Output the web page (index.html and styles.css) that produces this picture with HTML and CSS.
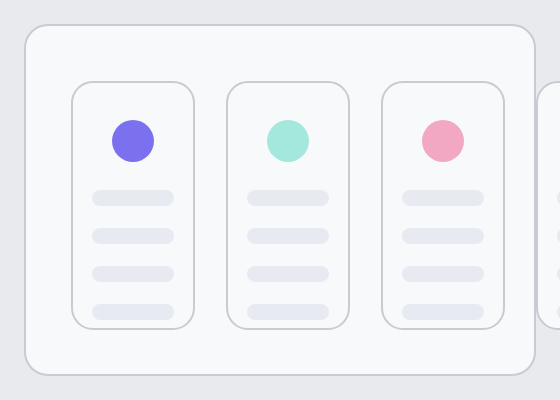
FILE: index.html
```html
<!DOCTYPE html>
<html lang="en">
<head>
    <meta charset="UTF-8">
    <meta name="viewport" content="width=device-width, initial-scale=1.0">
    <title>Card Carousel</title>
    <link rel="stylesheet" href="styles.css">
</head>
<body>
    <div class="frame">
        <div class="strip">
            <!-- Each card: avatar dot + placeholder lines -->
            <div class="card">
                <div class="dot purple"></div>
                <div class="line"></div>
                <div class="line"></div>
                <div class="line"></div>
                <div class="line"></div>
            </div>
            <div class="card">
                <div class="dot teal"></div>
                <div class="line"></div>
                <div class="line"></div>
                <div class="line"></div>
                <div class="line"></div>
            </div>
            <div class="card">
                <div class="dot pink"></div>
                <div class="line"></div>
                <div class="line"></div>
                <div class="line"></div>
                <div class="line"></div>
            </div>
            <div class="card">
                <div class="dot purple"></div>
                <div class="line"></div>
                <div class="line"></div>
                <div class="line"></div>
                <div class="line"></div>
            </div>
        </div>
    </div>
</body>
</html>
```

FILE: styles.css
```css
/* Page */
body {
    margin: 0;
    padding: 24px;
    overflow: hidden;
    background: #e9eaee;
    font-family: "Liberation Sans", Arial, sans-serif;
}

/* Outer frame */
.frame {
    box-sizing: border-box;
    width: 512px;
    height: 352px;
    padding: 55px 0 0 45px;
    background: #f8f9fb;
    border: 2px solid #c9cbd3;
    border-radius: 24px;
}

/* Row of cards, runs past the frame */
.strip {
    display: flex;
    gap: 31px;
}

.card {
    box-sizing: border-box;
    flex-shrink: 0;
    width: 124px;
    height: 249px;
    padding-top: 37px;
    display: flex;
    flex-direction: column;
    align-items: center;
    gap: 22px;
    background: #f8f9fb;
    border: 2px solid #c9cbd3;
    border-radius: 22px;
}

.dot {
    width: 42px;
    height: 42px;
    border-radius: 50%;
    margin-bottom: 6px;
}

.purple { background: #7b70ee; }
.teal   { background: #a4e8dd; }
.pink   { background: #f2a7c3; }

.line {
    width: 82px;
    height: 16px;
    border-radius: 8px;
    background: #e8eaf2;
}
```
